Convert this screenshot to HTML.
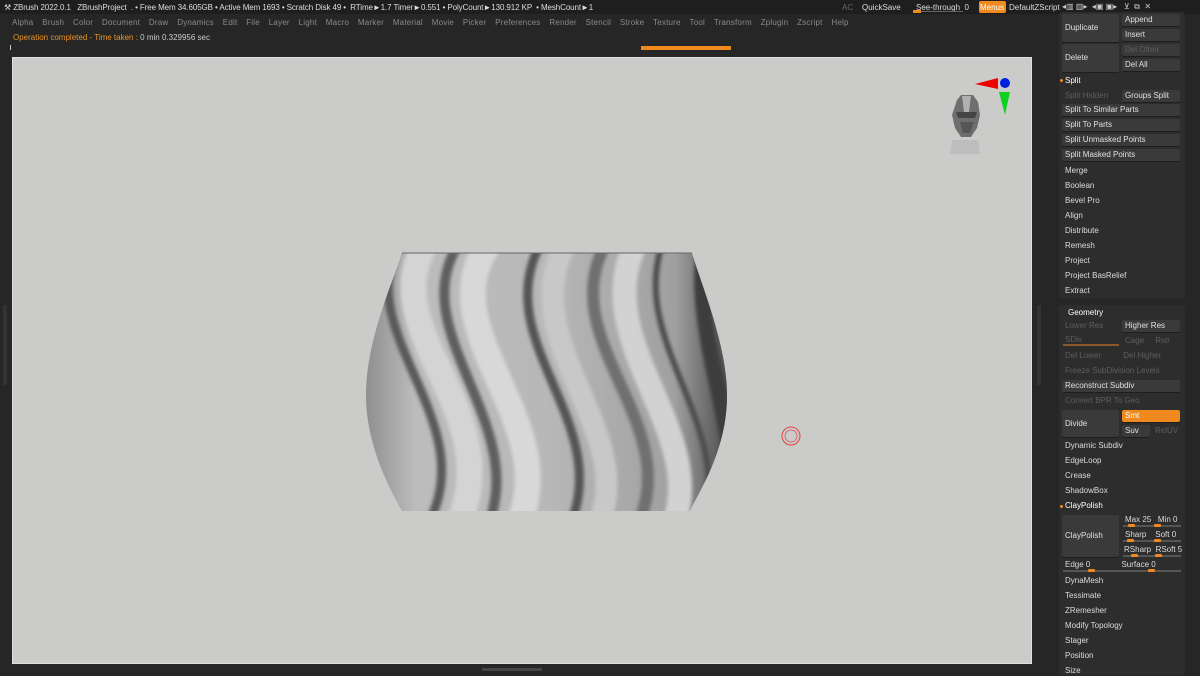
<!DOCTYPE html>
<html><head><meta charset="utf-8"><style>
*{margin:0;padding:0;box-sizing:border-box}
body{width:1200px;height:675px;background:#262626;position:relative;overflow:hidden;font-family:"Liberation Sans",sans-serif;font-size:8px;color:#ddd}
.a{position:absolute;white-space:nowrap}
.b{position:absolute;background:#3a3a3a;border-radius:2px;padding-left:3px;line-height:12px;color:#e0e0e0;box-shadow:0 1px 0 #1e1e1e}
.t{position:absolute;left:1065px;color:#dcdcdc;line-height:10px}
.d,.t.d,.b.d{color:#5e5e5e}
.o{background:#f08a1e;color:#fff}
.sl{position:absolute;height:2px;background:#555}
.k{position:absolute;width:7px;height:3px;background:#f08a1e;border-radius:1px}
</style></head><body>
<div class="a" style="left:0;top:0;width:1200px;height:14px;background:#1e1e1e"></div>
<div class="a" style="left:4px;top:3px;color:#ddd;letter-spacing:-0.1px">⚒ ZBrush 2022.0.1 &nbsp;&nbsp;ZBrushProject &nbsp;. • Free Mem 34.605GB • Active Mem 1693 • Scratch Disk 49 • &nbsp;RTime►1.7 Timer►0.551 • PolyCount►130.912 KP &nbsp;• MeshCount►1</div>
<div class="a" style="left:842px;top:3px;color:#666">AC</div>
<div class="a" style="left:862px;top:3px">QuickSave</div>
<div class="a" style="left:916px;top:3px">See-through &nbsp;0</div>
<div class="a" style="left:913px;top:11px;width:50px;height:1px;background:#666"></div>
<div class="a" style="left:913px;top:10px;width:8px;height:3px;background:#f08a1e"></div>
<div class="a" style="left:979px;top:1px;width:27px;height:12px;background:#f08a1e;border-radius:2px;color:#fff;padding:2px 1px">Menus</div>
<div class="a" style="left:1009px;top:3px">DefaultZScript</div>
<div class="a" style="left:1062px;top:2px;color:#ccc;font-size:8px">◂▥ ▥▸ &nbsp;◂▣ ▣▸ &nbsp; ⊻ &nbsp;⧉ &nbsp;✕</div>
<div class="a" style="left:12px;top:18px;color:#8a8a8a;word-spacing:2px;letter-spacing:0.2px">Alpha &nbsp;Brush &nbsp;Color &nbsp;Document &nbsp;Draw &nbsp;Dynamics &nbsp;Edit &nbsp;File &nbsp;Layer &nbsp;Light &nbsp;Macro &nbsp;Marker &nbsp;Material &nbsp;Movie &nbsp;Picker &nbsp;Preferences &nbsp;Render &nbsp;Stencil &nbsp;Stroke &nbsp;Texture &nbsp;Tool &nbsp;Transform &nbsp;Zplugin &nbsp;Zscript &nbsp;Help</div>
<div class="a" style="left:13px;top:33px;color:#e8932a">Operation completed - Time taken : <span style="color:#ccc">0 min 0.329956 sec</span></div>
<div class="a" style="left:641px;top:46px;width:90px;height:4px;background:#f08a1e"></div>
<div class="a" style="left:10px;top:45px;width:1px;height:5px;background:#ccc"></div>
<div class="a" style="left:12px;top:57px;width:1020px;height:607px;background:#cbcbca;border:1px solid #e0e0e0"></div>
<div class="a" style="left:3px;top:305px;width:4px;height:80px;background:#333"></div>
<div class="a" style="left:1037px;top:305px;width:4px;height:80px;background:#333"></div>
<div class="a" style="left:482px;top:668px;width:60px;height:3px;background:#444"></div>
<svg class="a" style="left:0;top:0" width="1200" height="675">
<defs>
<clipPath id="v"><path d="M402,253 L692,253 C703,290 727,345 727,395 C727,450 700,490 690,511 L402,511 C390,490 366,445 366,395 C366,340 392,285 402,253 Z"/></clipPath>
<linearGradient id="g" x1="0" x2="1"><stop offset="0" stop-color="#8a8a8a"/><stop offset=".15" stop-color="#bcbcbc"/><stop offset=".5" stop-color="#b8b8b8"/><stop offset=".85" stop-color="#a0a0a0"/><stop offset="1" stop-color="#4a4a4a"/></linearGradient>
<filter id="bl"><feGaussianBlur stdDeviation="1.8"/></filter>
</defs>
<g clip-path="url(#v)">
<rect x="360" y="250" width="370" height="265" fill="url(#g)"/>
<g fill="none" filter="url(#bl)">
<path d="M400,245 C350,330 480,420 430,520" stroke="#5a5a5a" stroke-width="9"/>
<path d="M425,245 C375,330 505,410 460,520" stroke="#d4d4d4" stroke-width="26"/>
<path d="M458,245 C405,330 525,420 490,520" stroke="#5e5e5e" stroke-width="10"/>
<path d="M488,245 C430,330 560,420 520,520" stroke="#d8d8d8" stroke-width="26"/>
<path d="M540,245 C490,340 610,420 572,520" stroke="#555" stroke-width="9"/>
<path d="M565,245 C515,340 635,430 600,520" stroke="#c8c8c8" stroke-width="22"/>
<path d="M605,245 C555,340 680,420 640,520" stroke="#707070" stroke-width="12"/>
<path d="M635,245 C590,340 705,430 675,520" stroke="#d2d2d2" stroke-width="24"/>
<path d="M662,245 C630,340 730,420 705,520" stroke="#4e4e4e" stroke-width="6"/>
<path d="M705,245 C690,330 740,430 735,520" stroke="#3e3e3e" stroke-width="16"/>
</g>
</g>
<line x1="402" y1="253" x2="692" y2="253" stroke="#666" stroke-width="1"/>
<circle cx="791" cy="436" r="9" fill="none" stroke="#d44" stroke-width="1"/>
<circle cx="791" cy="436" r="6" fill="none" stroke="#d44" stroke-width="0.7"/>
<polygon points="975,84 998,78 998,89" fill="#e00"/>
<circle cx="1005" cy="83" r="5" fill="#0020e0"/>
<polygon points="999,92 1010,92 1005,115" fill="#10d020"/>
<path d="M952,140 L978,140 L980,154 L950,154 Z" fill="#bdbdbd"/>
<path d="M957,100 L961,95 L973,95 L978,102 L980,115 L977,128 L971,137 L961,137 L955,128 L952,115 Z" fill="#6e6e6e"/>
<path d="M962,96 L971,96 L969,112 L964,112 Z" fill="#b0b0b0"/>
<path d="M956,112 L977,112 L975,118 L958,118 Z" fill="#444"/>
<path d="M960,122 L974,122 L970,133 L963,133 Z" fill="#555"/>
</svg>
<div class="a" style="left:1059px;top:12px;width:126px;height:287px;background:#2d2d2d;border-radius:3px"></div>
<div class="a" style="left:1059px;top:305px;width:126px;height:370px;background:#2d2d2d;border-radius:3px"></div>
<div class="b" style="left:1062px;top:14px;width:57px;height:28px;line-height:28px">Duplicate</div>
<div class="b" style="left:1122px;top:14px;width:58px;height:12px">Append</div>
<div class="b" style="left:1122px;top:29px;width:58px;height:12px">Insert</div>
<div class="b" style="left:1062px;top:44px;width:57px;height:28px;line-height:28px">Delete</div>
<div class="b d" style="left:1122px;top:44px;width:58px;height:12px">Del Other</div>
<div class="b" style="left:1122px;top:59px;width:58px;height:12px">Del All</div>
<div class="a" style="left:1060px;top:79px;width:3px;height:3px;background:#f08a1e;border-radius:2px"></div>
<div class="t" style="top:76px;color:#fff">Split</div>
<div class="t d" style="top:91px">Split Hidden</div>
<div class="b" style="left:1122px;top:90px;width:58px;height:12px">Groups Split</div>
<div class="b" style="left:1062px;top:104px;width:118px;height:12px">Split To Similar Parts</div>
<div class="b" style="left:1062px;top:119px;width:118px;height:12px">Split To Parts</div>
<div class="b" style="left:1062px;top:134px;width:118px;height:12px">Split Unmasked Points</div>
<div class="b" style="left:1062px;top:149px;width:118px;height:12px">Split Masked Points</div>
<div class="t" style="top:166px">Merge</div>
<div class="t" style="top:181px">Boolean</div>
<div class="t" style="top:196px">Bevel Pro</div>
<div class="t" style="top:211px">Align</div>
<div class="t" style="top:226px">Distribute</div>
<div class="t" style="top:241px">Remesh</div>
<div class="t" style="top:256px">Project</div>
<div class="t" style="top:271px">Project BasRelief</div>
<div class="t" style="top:286px">Extract</div>
<div class="t" style="top:308px;left:1068px;color:#fff">Geometry</div>
<div class="t d" style="top:321px">Lower Res</div>
<div class="b" style="left:1122px;top:320px;width:58px;height:12px">Higher Res</div>
<div class="t d" style="top:335px">SDiv</div>
<div class="a" style="left:1063px;top:344px;width:56px;height:2px;background:#8a5a2a"></div>
<div class="t d" style="top:336px;left:1125px">Cage &nbsp;&nbsp;&nbsp;&nbsp;Rstr</div>
<div class="t d" style="top:351px">Del Lower &nbsp;&nbsp;&nbsp;&nbsp;&nbsp;&nbsp;&nbsp;&nbsp;&nbsp;Del Higher</div>
<div class="t d" style="top:366px">Freeze SubDivision Levels</div>
<div class="b" style="left:1062px;top:380px;width:118px;height:12px">Reconstruct Subdiv</div>
<div class="t d" style="top:396px">Convert BPR To Geo</div>
<div class="b" style="left:1062px;top:410px;width:57px;height:27px;line-height:27px">Divide</div>
<div class="b o" style="left:1122px;top:410px;width:58px;height:12px">Smt</div>
<div class="b" style="left:1122px;top:425px;width:28px;height:12px">Suv</div>
<div class="t d" style="top:426px;left:1155px">RelUV</div>
<div class="t" style="top:441px">Dynamic Subdiv</div>
<div class="t" style="top:456px">EdgeLoop</div>
<div class="t" style="top:471px">Crease</div>
<div class="t" style="top:486px">ShadowBox</div>
<div class="a" style="left:1060px;top:505px;width:3px;height:3px;background:#f08a1e;border-radius:2px"></div>
<div class="t" style="top:501px;color:#fff">ClayPolish</div>
<div class="b" style="left:1062px;top:515px;width:57px;height:42px;line-height:42px">ClayPolish</div>
<div class="t" style="top:515px;left:1125px">Max 25 &nbsp;&nbsp;Min 0</div>
<div class="t" style="top:530px;left:1125px">Sharp &nbsp;&nbsp;&nbsp;Soft 0</div>
<div class="t" style="top:545px;left:1124px">RSharp &nbsp;RSoft 5</div>
<div class="sl" style="left:1123px;top:525px;width:58px"></div><div class="k" style="left:1128px;top:524px"></div><div class="k" style="left:1154px;top:524px"></div>
<div class="sl" style="left:1123px;top:540px;width:58px"></div><div class="k" style="left:1127px;top:539px"></div><div class="k" style="left:1154px;top:539px"></div>
<div class="sl" style="left:1123px;top:555px;width:58px"></div><div class="k" style="left:1131px;top:554px"></div><div class="k" style="left:1155px;top:554px"></div>
<div class="t" style="top:560px">Edge 0 &nbsp;&nbsp;&nbsp;&nbsp;&nbsp;&nbsp;&nbsp;&nbsp;&nbsp;&nbsp;&nbsp;&nbsp;&nbsp;Surface 0</div>
<div class="sl" style="left:1063px;top:570px;width:118px"></div><div class="k" style="left:1088px;top:569px"></div><div class="k" style="left:1148px;top:569px"></div>
<div class="t" style="top:576px">DynaMesh</div>
<div class="t" style="top:591px">Tessimate</div>
<div class="t" style="top:606px">ZRemesher</div>
<div class="t" style="top:621px">Modify Topology</div>
<div class="t" style="top:636px">Stager</div>
<div class="t" style="top:651px">Position</div>
<div class="t" style="top:666px">Size</div>
</body></html>
